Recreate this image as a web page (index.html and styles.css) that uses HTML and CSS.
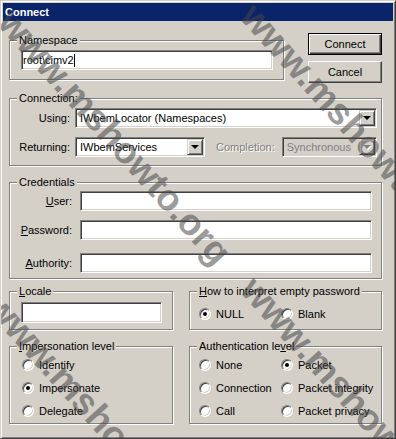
FILE: index.html
```html
<!DOCTYPE html>
<html>
  <head>
    <title>Connect</title>
    <meta name="viewport" content="width=device-width, initial-scale=1.0">
    <link rel="stylesheet" href="styles.css">
  </head>
  <body>
    <div class="window">
      <div class="titlebar">Connect</div>
      <div class="dialog">
        <div class="top-row">
          <fieldset class="group ns-group">
            <legend>Namespace</legend>
            <div class="ns-body">
              <div class="edit ns-edit"><span>root\cimv2</span><span class="caret"></span></div>
            </div>
          </fieldset>
          <div class="buttons">
            <button class="btn btn-default">Connect</button>
            <button class="btn">Cancel</button>
          </div>
        </div>

        <fieldset class="group conn-group">
          <legend>Connection:</legend>
          <div class="conn-body">
            <span class="field-label">Using:</span>
            <div class="combo combo-using"><span class="combo-text">IWbemLocator (Namespaces)</span><span class="drop"></span></div>
            <span class="field-label">Returning:</span>
            <div class="conn-row">
              <div class="combo combo-ret"><span class="combo-text">IWbemServices</span><span class="drop"></span></div>
              <span class="disabled-label">Completion:</span>
              <div class="combo combo-off"><span class="combo-text">Synchronous</span><span class="drop"></span></div>
            </div>
          </div>
        </fieldset>

        <fieldset class="group cred-group">
          <legend>Credentials</legend>
          <div class="cred-body">
            <span class="field-label"><u>U</u>ser:</span>
            <div class="edit"></div>
            <span class="field-label"><u>P</u>assword:</span>
            <div class="edit"></div>
            <span class="field-label auth-label"><u>A</u>uthority:</span>
            <div class="edit auth-edit"></div>
          </div>
        </fieldset>

        <div class="bottom-grid">
          <fieldset class="group">
            <legend><u>L</u>ocale</legend>
            <div class="locale-body">
              <div class="edit locale-edit"></div>
            </div>
          </fieldset>
          <fieldset class="group">
            <legend><u>H</u>ow to interpret empty password</legend>
            <div class="radio-grid pw-body">
              <label class="radio-item"><span class="radio checked"></span>NULL</label>
              <label class="radio-item"><span class="radio"></span>Blank</label>
            </div>
          </fieldset>
          <fieldset class="group">
            <legend><u>I</u>mpersonation level</legend>
            <div class="radio-list">
              <label class="radio-item"><span class="radio"></span>Identify</label>
              <label class="radio-item"><span class="radio checked"></span>Impersonate</label>
              <label class="radio-item"><span class="radio"></span>Delegate</label>
            </div>
          </fieldset>
          <fieldset class="group">
            <legend>Authentication le<u>v</u>el</legend>
            <div class="radio-grid">
              <label class="radio-item"><span class="radio"></span>None</label>
              <label class="radio-item"><span class="radio checked"></span>Packet</label>
              <label class="radio-item"><span class="radio"></span>Connection</label>
              <label class="radio-item"><span class="radio"></span>Packet integrity</label>
              <label class="radio-item"><span class="radio"></span>Call</label>
              <label class="radio-item"><span class="radio"></span>Packet privacy</label>
            </div>
          </fieldset>
        </div>
      </div>

      <div class="watermark">
        <span class="wm wm-a">www.mshowto.org</span>
        <span class="wm wm-b">www.mshowto.org</span>
        <span class="wm wm-c">www.mshowto.org</span>
        <span class="wm wm-d">www.mshowto.org</span>
      </div>
    </div>
  </body>
</html>
```

FILE: styles.css
```css
body {
  margin: 0;
  padding: 0;
  background-color: #d4d0c8;
  font-family: "Liberation Sans", Arial, sans-serif;
  font-size: 11px;
  color: #000;
}
.window {
  position: relative;
  overflow: hidden;
  box-sizing: border-box;
  width: 396px;
  height: 439px;
  padding: 2px;
  background-color: #d4d0c8;
  border: 1px solid;
  border-color: #d4d0c8 #404040 #404040 #d4d0c8;
  box-shadow: inset 1px 1px 0 #fff, inset -1px -1px 0 #808080;
}
.titlebar {
  height: 18px;
  line-height: 18px;
  padding-left: 2px;
  background-color: #0a246a;
  color: #fff;
  font-weight: bold;
}
.dialog {
  padding: 12px 11px 0 6px;
}
.top-row {
  display: flex;
  align-items: flex-start;
  gap: 24px;
  height: 50px;
}
.group {
  margin: 0;
  padding: 0;
  min-width: 0;
  box-sizing: border-box;
  border: 1px solid #808080;
  box-shadow: inset 1px 1px 0 #fff, 1px 1px 0 #fff;
}
.group legend {
  margin-left: 7px;
  padding: 0 2px;
  height: 13px;
  line-height: 13px;
  background-color: #d4d0c8;
}
.ns-group {
  width: 275px;
  margin-top: 1px;
}
.ns-body {
  padding: 3px 0 9px 11px;
}
.ns-edit {
  width: 252px;
}
.buttons {
  display: flex;
  flex-direction: column;
  gap: 6px;
}
.btn {
  box-sizing: border-box;
  width: 74px;
  height: 22px;
  padding: 0;
  font-family: inherit;
  font-size: 11px;
  color: #000;
  background-color: #d4d0c8;
  border: 1px solid;
  border-color: #fff #404040 #404040 #fff;
  box-shadow: inset -1px -1px 0 #808080, inset 1px 1px 0 #d4d0c8;
}
.btn-default {
  border-color: #000;
  box-shadow: inset 1px 1px 0 #fff, inset -1px -1px 0 #404040, inset -2px -2px 0 #808080;
}
.edit {
  box-sizing: border-box;
  height: 20px;
  padding-left: 1px;
  display: flex;
  align-items: center;
  background-color: #fff;
  border: 1px solid;
  border-color: #808080 #fff #fff #808080;
  box-shadow: inset 1px 1px 0 #404040, inset -1px -1px 0 #d4d0c8;
}
.caret {
  width: 1px;
  height: 13px;
  background-color: #000;
}
.conn-group {
  margin-top: 9px;
}
.conn-body {
  display: grid;
  grid-template-columns: 60px 1fr;
  column-gap: 5px;
  row-gap: 9px;
  align-items: center;
  padding: 3px 10px 8px 0;
}
.field-label {
  text-align: right;
  white-space: nowrap;
}
.combo {
  box-sizing: border-box;
  height: 20px;
  display: flex;
  align-items: center;
  background-color: #fff;
  border: 1px solid;
  border-color: #808080 #fff #fff #808080;
  box-shadow: inset 1px 1px 0 #404040, inset -1px -1px 0 #d4d0c8;
  padding: 1px;
}
.combo-text {
  flex: 1;
  padding-left: 3px;
  white-space: nowrap;
  overflow: hidden;
}
.drop {
  position: relative;
  box-sizing: border-box;
  width: 16px;
  height: 16px;
  background-color: #d4d0c8;
  border: 1px solid;
  border-color: #d4d0c8 #404040 #404040 #d4d0c8;
  box-shadow: inset 1px 1px 0 #fff, inset -1px -1px 0 #808080;
}
.drop::after {
  content: "";
  position: absolute;
  left: 3px;
  top: 5px;
  border-left: 4px solid transparent;
  border-right: 4px solid transparent;
  border-top: 4px solid #000;
}
.conn-row {
  display: flex;
  align-items: center;
}
.combo-ret {
  width: 130px;
}
.disabled-label {
  margin-left: 11px;
  color: #808080;
  text-shadow: 1px 1px 0 #fff;
}
.combo-off {
  width: 95px;
  margin-left: 7px;
  background-color: #d4d0c8;
  color: #808080;
}
.combo-off .drop::after {
  border-top-color: #808080;
  filter: drop-shadow(1px 1px 0 #fff);
}
.cred-group {
  margin-top: 10px;
}
.cred-body {
  display: grid;
  grid-template-columns: 62px 1fr;
  column-gap: 8px;
  row-gap: 9px;
  align-items: center;
  padding: 2px 9px 5px 0;
}
.auth-label,
.auth-edit {
  margin-top: 4px;
}
.bottom-grid {
  display: grid;
  grid-template-columns: 164px 193px;
  column-gap: 16px;
  row-gap: 10px;
  margin-top: 6px;
}
.locale-body {
  padding: 4px 0 6px 11px;
}
.locale-edit {
  width: 141px;
  height: 21px;
}
.radio-grid {
  display: grid;
  grid-template-columns: 82px auto;
  grid-auto-rows: 23px;
  padding: 0 0 1px 9px;
}
.pw-body {
  padding-top: 4px;
}
.radio-list {
  display: grid;
  grid-auto-rows: 23px;
  padding: 0 0 1px 12px;
}
.radio-item {
  display: flex;
  align-items: center;
  gap: 5px;
  white-space: nowrap;
}
.radio {
  position: relative;
  flex: none;
  box-sizing: border-box;
  width: 12px;
  height: 12px;
  border-radius: 50%;
  background-color: #fff;
  border: 1px solid;
  border-color: #808080 #fff #fff #808080;
  box-shadow: inset 1px 1px 0 #404040, inset -1px -1px 0 #d4d0c8;
}
.radio.checked::after {
  content: "";
  position: absolute;
  left: 3px;
  top: 3px;
  width: 4px;
  height: 4px;
  border-radius: 50%;
  background-color: #000;
}
.watermark {
  position: absolute;
  left: 0;
  top: 0;
  width: 396px;
  height: 439px;
  pointer-events: none;
}
.wm {
  position: absolute;
  font-family: "Liberation Sans", Arial, sans-serif;
  font-weight: bold;
  font-size: 37px;
  line-height: 37px;
  white-space: nowrap;
  color: rgba(70, 70, 70, 0.55);
  transform-origin: 0 50%;
  transform: rotate(48deg);
}
.wm-a { left: 4px; top: -4px; }
.wm-b { left: 247px; top: -10px; }
.wm-c { left: -8px; top: 280px; }
.wm-d { left: 247px; top: 263px; }
```
